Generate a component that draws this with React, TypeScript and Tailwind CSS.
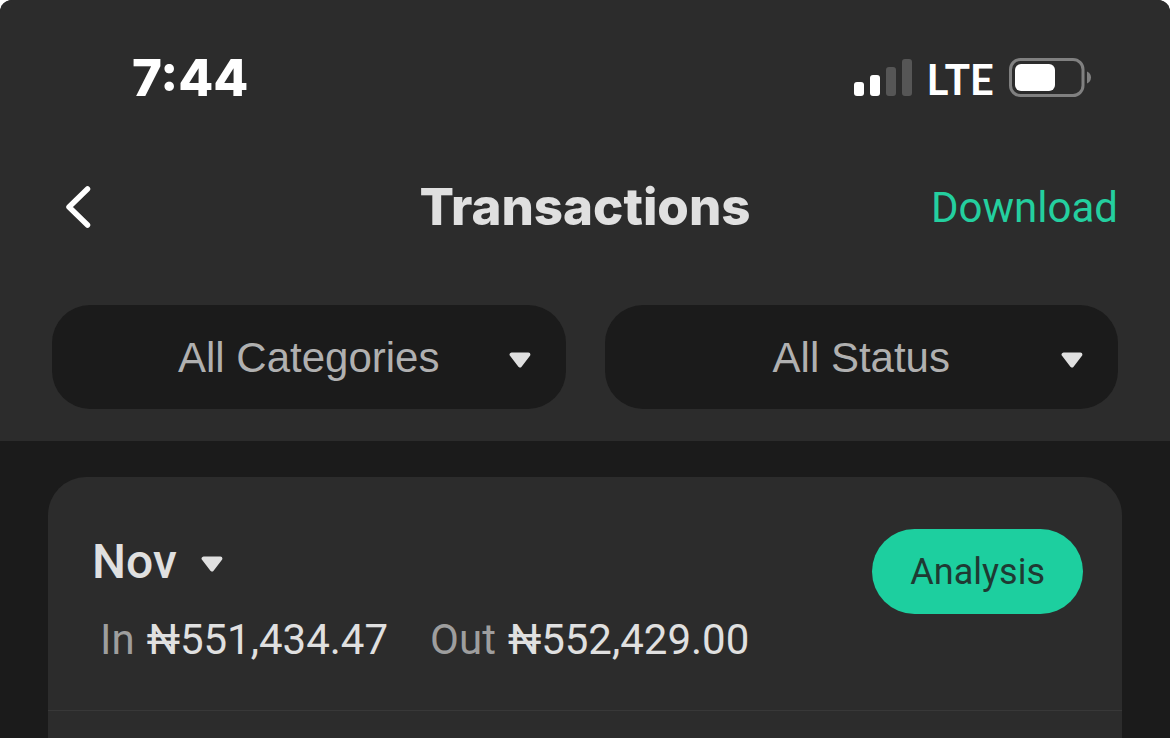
import type { ReactNode } from "react";

function Caret() {
  return (
    <svg className="h-4 w-[22px] shrink-0" viewBox="0 0 22 16" aria-hidden="true">
      <path
        d="M2.600 2.500h16.800L11 13.500z"
        fill="#e0e0e0"
        stroke="#e0e0e0"
        strokeWidth="4"
        strokeLinejoin="round"
      />
    </svg>
  );
}

function SignalIcon() {
  return (
    <svg className="h-[38px] w-[58px]" viewBox="0 0 58 38" role="img" aria-label="Signal strength">
      <rect x="0" y="23" width="10" height="14" rx="3" fill="#fff" />
      <rect x="16" y="16" width="10" height="21" rx="3" fill="#fff" />
      <rect x="32" y="8" width="10" height="29" rx="3" fill="#565656" />
      <rect x="48" y="0" width="10" height="37" rx="3" fill="#565656" />
    </svg>
  );
}

function BatteryIcon() {
  return (
    <svg className="h-10 w-[83px]" viewBox="0 0 83 40" role="img" aria-label="Battery">
      <rect x="1.5" y="1.5" width="72.500" height="36" rx="10" fill="none" stroke="#808080" strokeWidth="3" />
      <rect x="6" y="6" width="40" height="27" rx="6" fill="#fff" />
      <path d="M78 13.500c2.400 1 4 3.300 4 6s-1.600 5-4 6z" fill="#808080" />
    </svg>
  );
}

function Filter({ label, options }: { label: string; options: string[] }) {
  return (
    <div className="relative">
      <select
        aria-label={label}
        className="h-[104px] w-full appearance-none rounded-[38px] bg-[#1b1b1b] px-12 text-center font-['Liberation_Sans',sans-serif] text-[42px] text-[#b0b0b0] [text-align-last:center]"
      >
        {options.map((option) => (
          <option key={option}>{option}</option>
        ))}
      </select>
      <span className="pointer-events-none absolute inset-y-0 right-[35px] flex items-center pt-1.5">
        <Caret />
      </span>
    </div>
  );
}

function Total({ label, children }: { label: string; children: ReactNode }) {
  return (
    <div className="flex gap-3">
      <dt className="text-[#9e9e9e]">{label}</dt>
      <dd className="text-[#e0e0e0]">{children}</dd>
    </div>
  );
}

export default function App() {
  return (
    <div className="bg-white font-[Roboto,sans-serif]">
      <div className="flex min-h-screen flex-col overflow-hidden rounded-t-[12px] bg-[#1b1b1b]">
        <header className="bg-[#2c2c2c] pb-8">
          <div className="flex h-[156px] items-center justify-between pr-[78px] pl-[132px] text-white">
            <time className="font-[Inter,sans-serif] text-[51px] font-extrabold">7:44</time>
            <div className="flex items-center gap-[15px]">
              <SignalIcon />
              <span className="pt-0.5 font-[Lato,sans-serif] text-[42px] leading-none font-bold">LTE</span>
              <BatteryIcon />
            </div>
          </div>

          <nav className="grid h-[102px] grid-cols-[1fr_auto_1fr] items-center px-[52px]">
            <a href="#back" aria-label="Back" className="justify-self-start pl-3">
              <svg className="h-[44px] w-[28px]" viewBox="0 0 28 44" fill="none" aria-hidden="true">
                <path
                  d="M23.500 4 5 22l18.500 18"
                  stroke="#fff"
                  strokeWidth="5.500"
                  strokeLinecap="round"
                  strokeLinejoin="round"
                />
              </svg>
            </a>
            <h1 className="font-[Inter,sans-serif] text-[51px] font-extrabold text-[#e0e0e0]">Transactions</h1>
            <a href="#download" className="justify-self-end text-[42px] text-[#24cf9f]">
              Download
            </a>
          </nav>

          <div className="mt-[47px] grid grid-cols-2 gap-[39px] px-[52px]">
            <Filter label="Category" options={["All Categories"]} />
            <Filter label="Status" options={["All Status"]} />
          </div>
        </header>

        <main className="flex flex-1 flex-col px-12 pt-9">
          <section className="flex-1 rounded-t-[38px] bg-[#2c2c2c]">
            <div className="flex items-start justify-between border-b border-[#383838] pt-[52px] pr-[39px] pb-10 pl-11">
              <div>
                <div className="flex items-center gap-6">
                  <select
                    aria-label="Month"
                    className="h-[66px] appearance-none bg-transparent text-[48px] leading-[66px] font-medium text-[#e0e0e0]"
                  >
                    <option>Nov</option>
                  </select>
                  <span className="pointer-events-none pt-1">
                    <Caret />
                  </span>
                </div>
                <dl className="mt-[15px] flex gap-[42px] pl-2 text-[42px] leading-[60px]">
                  <Total label="In">₦551,434.47</Total>
                  <Total label="Out">₦552,429.00</Total>
                </dl>
              </div>
              <button className="h-[85px] rounded-full bg-[#1dcf9f] px-[38px] text-[36px] text-[#1f3a33]">
                Analysis
              </button>
            </div>
          </section>
        </main>
      </div>
    </div>
  );
}
